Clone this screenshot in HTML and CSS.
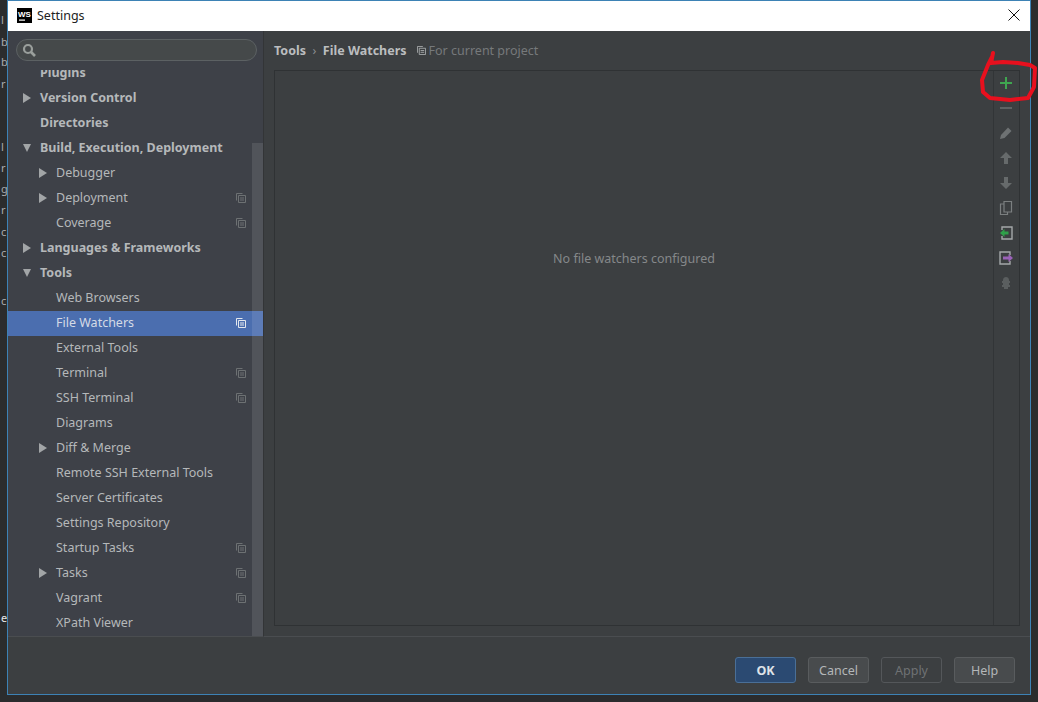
FILE: index.html
```html
<!DOCTYPE html>
<html lang="en">
<head>
<meta charset="utf-8">
<title>Settings</title>
<link rel="stylesheet" href="styles.css">
</head>
<body>
<div class="desk">
  <div class="behind">
    <span class="frag f1">l</span><span class="frag f2">b</span><span class="frag f3">b</span><span class="frag f4">r</span>
    <span class="frag f5">l</span><span class="frag f6">r</span><span class="frag f7">g</span><span class="frag f8">r</span><span class="frag f9">c</span><span class="frag f10">c</span><span class="frag f11">c</span><span class="frag f12">e</span>
  </div>
  <div class="window">
    <header class="titlebar">
      <svg class="ws" width="15" height="15" viewBox="0 0 15 15"><rect width="15" height="15" fill="#000"/><text x="1" y="8.5" class="ws-text">WS</text><rect x="2" y="11.5" width="6" height="1.2" fill="#fff"/></svg>
      <span class="title">Settings</span>
      <svg class="close" width="12" height="12" viewBox="0 0 12 12"><path d="M.5.5l11 11M11.500.5l-11 11" stroke="#111" stroke-width="1" fill="none"/></svg>
    </header>
    <div class="content">
      <aside class="sidebar">
        <div class="search">
          <svg width="15" height="15" viewBox="0 0 15 15"><circle cx="6" cy="6" r="4" fill="none" stroke="#9a9f9c" stroke-width="2.200"/><path d="M9 9l4 4" stroke="#9a9f9c" stroke-width="2.600"/></svg>
        </div>
        <div class="tree">
          <div class="row l1 b cut">Plugins</div>
          <div class="row l1 b"><i class="arrow r"></i>Version Control</div>
          <div class="row l1 b">Directories</div>
          <div class="row l1 b"><i class="arrow d"></i>Build, Execution, Deployment</div>
          <div class="row l2"><i class="arrow r"></i>Debugger</div>
          <div class="row l2"><i class="arrow r"></i>Deployment<svg class="cp"><use href="#copy"/></svg></div>
          <div class="row l2">Coverage<svg class="cp"><use href="#copy"/></svg></div>
          <div class="row l1 b"><i class="arrow r"></i>Languages &amp; Frameworks</div>
          <div class="row l1 b"><i class="arrow d"></i>Tools</div>
          <div class="row l2">Web Browsers</div>
          <div class="row l2 sel">File Watchers<svg class="cp"><use href="#copy"/></svg></div>
          <div class="row l2">External Tools</div>
          <div class="row l2">Terminal<svg class="cp"><use href="#copy"/></svg></div>
          <div class="row l2">SSH Terminal<svg class="cp"><use href="#copy"/></svg></div>
          <div class="row l2">Diagrams</div>
          <div class="row l2"><i class="arrow r"></i>Diff &amp; Merge</div>
          <div class="row l2">Remote SSH External Tools</div>
          <div class="row l2">Server Certificates</div>
          <div class="row l2">Settings Repository</div>
          <div class="row l2">Startup Tasks<svg class="cp"><use href="#copy"/></svg></div>
          <div class="row l2"><i class="arrow r"></i>Tasks<svg class="cp"><use href="#copy"/></svg></div>
          <div class="row l2">Vagrant<svg class="cp"><use href="#copy"/></svg></div>
          <div class="row l2">XPath Viewer</div>
          <div class="scrollbar"></div>
        </div>
      </aside>
      <main class="main">
        <div class="crumbs">
          <b>Tools</b><span class="sep">›</span><b>File Watchers</b>
          <svg class="cp scope"><use href="#copy"/></svg><span class="scope-text">For current project</span>
        </div>
        <div class="panel">
          <div class="empty">No file watchers configured</div>
          <div class="tools">
            <svg class="tool" viewBox="0 0 14 14"><path d="M7 1v12M1 7h12" stroke="#3fa650" stroke-width="2"/></svg>
            <svg class="tool" viewBox="0 0 14 14"><path d="M1 7h12" stroke="#5f6364" stroke-width="2"/></svg>
            <svg class="tool" viewBox="0 0 14 14"><path d="M1 13l1-4 7-7.500 3.500 3.500-7 7z" fill="#6e7273"/></svg>
            <svg class="tool" viewBox="0 0 14 14"><path d="M7 1l6 6H9v6H5V7H1z" fill="#666a6b"/></svg>
            <svg class="tool" viewBox="0 0 14 14"><path d="M7 13L1 7h4V1h4v6h4z" fill="#666a6b"/></svg>
            <svg class="tool" viewBox="0 0 14 14"><path d="M5 3H1.500v10.500H8.500V11M5 .5h7.500v10.500H5z" fill="none" stroke="#7b7f80" stroke-width="1.200"/></svg>
            <svg class="tool" viewBox="0 0 14 14"><path d="M3 4V1h10v12H3v-3" fill="none" stroke="#a4a8a9" stroke-width="1.400"/><path d="M1 7l4.500-4v2.500h4v3h-4V11z" fill="#2fa04a"/></svg>
            <svg class="tool" viewBox="0 0 14 14"><path d="M11 4V1H1v12h10v-3" fill="none" stroke="#a4a8a9" stroke-width="1.400"/><path d="M14 7L9.500 3v2.500H4v3h5.500V11z" fill="#9a62b8"/></svg>
            <svg class="tool" viewBox="0 0 14 14"><path d="M4 4c0-4 6-4 6 0v1h1v2h-1v2h1v2h-2v2H5v-2H3V9h1V7H3V5h1z" fill="#5a5e5f"/></svg>
          </div>
        </div>
      </main>
    </div>
    <footer class="footer">
      <button class="btn ok">OK</button>
      <button class="btn">Cancel</button>
      <button class="btn off">Apply</button>
      <button class="btn">Help</button>
    </footer>
  </div>
</div>
<svg class="defs" width="0" height="0"><defs><symbol id="copy" viewBox="0 0 10 10"><path d="M.5 7.500V.5h6M2.500 2.500h7v7h-7zM4 5h4M4 7h4" fill="none" stroke="currentColor"/></symbol></defs></svg>
<svg class="scribble" width="65" height="60" viewBox="0 0 65 60"><path d="M20 3L18 13L30 12L45 13L57 15L62 18L61 37L55 48L37 50L17 48L10 42L9 30L15 15L19 7" fill="none" stroke="#e8101e" stroke-width="4" stroke-linecap="round" stroke-linejoin="round"/></svg>
</body>
</html>
```
FILE: styles.css
```css
* { box-sizing: border-box; }
html, body { margin: 0; height: 100%; }
body { background: #2b2c2d; font-family: "Noto Sans", sans-serif; font-size: 12.5px; overflow: hidden; position: relative; }
.defs { position: absolute; }
.desk { height: 702px; padding: 0 7px 7px 7px; position: relative; }
.behind { position: absolute; inset: 0; overflow: hidden; color: #a9abad; font-size: 11px; }
.frag { position: absolute; left: 1px; line-height: 14px; }
.f1 { top: 13px; } .f2 { top: 35px; } .f3 { top: 55px; } .f4 { top: 77px; }
.f5 { top: 140px; } .f6 { top: 161px; } .f7 { top: 182px; } .f8 { top: 203px; } .f9 { top: 225px; } .f10 { top: 246px; } .f11 { top: 294px; } .f12 { top: 611px; color: #e8e8e8; }
.window { position: relative; height: 695px; width: 1024px; border: 1px solid #3d82b5; background: #3c3f41; display: flex; flex-direction: column; }
.titlebar { height: 30px; background: #fff; display: flex; align-items: center; padding: 0 10px 2px 9px; color: #222; flex: none; }
.ws { margin-right: 5px; }
.ws-text { font: bold 8px "Liberation Sans", sans-serif; fill: #fff; }
.title { font-size: 12.5px; flex: 1; }
.content { flex: 1; display: flex; min-height: 0; }
.sidebar { width: 256px; background: #3e4148; border-right: 1px solid #333537; border-bottom: 1px solid #4a4d50; display: flex; flex-direction: column; flex: none; }
.search { height: 22px; margin: 8px 6px 9px 8px; border-radius: 11px; border: 1px solid #5c6163; background: #45494a; display: flex; align-items: center; padding-left: 5px; flex: none; }
.tree { flex: 1; position: relative; overflow: hidden; color: #b5b8ba; }
.row { height: 25px; line-height: 24px; position: relative; white-space: nowrap; }
.row.cut { margin-top: -9px; }
.l1 { padding-left: 32px; }
.l2 { padding-left: 48px; }
.b { font-weight: 700; }
.sel { background: #4b6eaf; color: #d5dbe6; }
.arrow { position: absolute; width: 0; height: 0; }
.arrow.r { border-left: 8px solid #a2a5a7; border-top: 5px solid transparent; border-bottom: 5px solid transparent; top: 7px; }
.arrow.d { border-top: 8px solid #a2a5a7; border-left: 4.500px solid transparent; border-right: 4.500px solid transparent; top: 8px; }
.l1 .arrow { left: 15px; }
.l2 .arrow { left: 31px; }
.cp { width: 10px; height: 10px; color: #6d7173; }
.row .cp { position: absolute; right: 17px; top: 7px; }
.sel .cp { color: #e4e8ee; }
.scrollbar { position: absolute; right: 0; top: 73px; bottom: 0; width: 11px; background: rgba(255, 255, 255, 0.1); }
.main { flex: 1; min-width: 0; padding: 0 10px 10px 10px; display: flex; flex-direction: column; border-bottom: 1px solid #4a4d50; }
.crumbs { height: 39px; display: flex; align-items: center; color: #bbbdbf; flex: none; }
.sep { margin: 0 6.500px; color: #8a8d8f; }
.crumbs .scope { margin: 0 3px 0 10px; width: 9px; height: 9px; color: #a8abad; }
.scope-text { color: #76797b; }
.panel { flex: 1; border: 1px solid #2f3234; display: flex; position: relative; }
.empty { flex: 1; display: flex; align-items: center; justify-content: center; color: #85888a; padding-bottom: 180px; }
.tools { width: 26px; border-left: 1px solid #323537; display: flex; flex-direction: column; align-items: center; padding: 5px 1px 0 0; gap: 11px; }
.tool { width: 14px; height: 14px; flex: none; }
.footer { height: 57px; flex: none; display: flex; justify-content: flex-end; align-items: center; gap: 12px; padding: 9px 15px 0 0; }
.btn { width: 61px; height: 26px; border-radius: 3px; font: 12.5px "Noto Sans", sans-serif; background: #484b4d; border: 1px solid #595c5e; color: #b4b7b9; padding: 0; }
.ok { background: #2b4a72; border-color: #4a6f97; color: #dfe3e8; font-weight: 700; }
.off { background: #3c3f41; border-color: #54575a; color: #6f7274; }
.scribble { position: absolute; left: 973px; top: 50px; }
```
